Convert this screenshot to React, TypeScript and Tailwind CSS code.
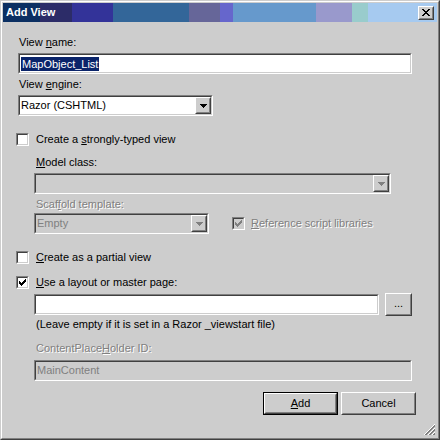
import type { ReactNode } from 'react';

// classic 3D sunken field (edit / combo)
function Sunken({ className, bg, children }: { className: string; bg: string; children?: ReactNode }) {
  return (
    <div className={`border border-t-[#808080] border-l-[#808080] border-r-white border-b-white ${className}`}>
      <div className={`h-full flex items-stretch border border-t-[#404040] border-l-[#404040] border-r-[#cdcdcd] border-b-[#cdcdcd] ${bg}`}>
        {children}
      </div>
    </div>
  );
}

function Raised({ className, children }: { className: string; children?: ReactNode }) {
  return (
    <div className={`border border-t-white border-l-white border-r-[#404040] border-b-[#404040] bg-[#cdcdcd] ${className}`}>
      <div className="h-full flex items-center justify-center border border-t-[#cdcdcd] border-l-[#cdcdcd] border-r-[#808080] border-b-[#808080]">
        {children}
      </div>
    </div>
  );
}

function Arrow({ disabled }: { disabled?: boolean }) {
  return (
    <svg width="7" height="4" viewBox="0 0 7 4" shapeRendering="crispEdges">
      <path d="M0 0h7v1H0zM1 1h5v1H1zM2 2h3v1H2zM3 3h1v1H3z" fill={disabled ? '#808080' : '#000'} />
    </svg>
  );
}

function Combo({ className, text, disabled }: { className: string; text: string; disabled?: boolean }) {
  return (
    <Sunken className={className} bg={disabled ? 'bg-[#cdcdcd]' : 'bg-white'}>
      <span className={`flex-1 pl-px leading-[17px] ${disabled ? 'text-[#808080]' : 'text-black'}`}>{text}</span>
      <Raised className="w-[16px] h-[17px]">
        <Arrow disabled={disabled} />
      </Raised>
    </Sunken>
  );
}

function Check({ checked, disabled }: { checked?: boolean; disabled?: boolean }) {
  return (
    <Sunken className="w-[13px] h-[13px] shrink-0" bg={disabled ? 'bg-[#cdcdcd]' : 'bg-white'}>
      {checked && (
        <svg width="9" height="9" viewBox="0 0 9 9" shapeRendering="crispEdges">
          <path
            d="M7 1h1v3H7zM6 2h1v3H6zM5 3h1v3H5zM4 4h1v3H4zM3 5h1v3H3zM2 4h1v3H2zM1 3h1v3H1z"
            fill={disabled ? '#808080' : '#000'}
          />
        </svg>
      )}
    </Sunken>
  );
}

const dim = 'text-[#808080] [text-shadow:1px_1px_0_#fff]';

export default function App() {
  return (
    <div className="w-[440px] h-[440px] bg-[#cdcdcd] border border-t-[#cdcdcd] border-l-[#cdcdcd] border-r-[#404040] border-b-[#404040] font-['Liberation_Sans',Arial,sans-serif] text-[11px] leading-[13px] text-black">
      <div className="h-full flex flex-col p-px border border-t-white border-l-white border-r-[#808080] border-b-[#808080]">
        {/* title bar */}
        <div className="h-[19px] shrink-0 flex items-center justify-between pl-[3px] pr-[3px] bg-[linear-gradient(to_right,#0b2f62_0px,#0b2f62_37px,#2c2c68_37px,#2c2c68_69px,#333399_69px,#333399_110px,#336699_110px,#336699_186px,#666699_186px,#666699_217px,#6666cc_217px,#6666cc_230px,#6699cc_230px,#6699cc_313px,#9999cc_313px,#9999cc_349px,#99cccc_349px,#99cccc_365px,#a6caf0_365px)]">
          <span className="text-white font-bold text-[11px]">Add View</span>
          <Raised className="w-[16px] h-[14px]">
            <svg width="8" height="7" viewBox="0 0 8 7" shapeRendering="crispEdges">
              <path d="M0 0h2v1H0zM6 0h2v1H6zM1 1h2v1H1zM5 1h2v1H5zM2 2h4v1H2zM3 3h2v1H3zM2 4h4v1H2zM1 5h2v1H1zM5 5h2v1H5zM0 6h2v1H0zM6 6h2v1H6z" fill="#000" />
            </svg>
          </Raised>
        </div>

        {/* body */}
        <div className="relative flex-1 flex flex-col items-start">
          <div className="mt-[14px] ml-[16px]">View <u>n</u>ame:</div>
          <Sunken className="mt-[4px] ml-[15px] w-[394px] h-[21px]" bg="bg-white">
            <span className="self-center ml-px leading-[14px] px-px bg-[#0a246a] text-white">MapObject_List</span>
          </Sunken>

          <div className="mt-[4px] ml-[16px]">View <u>e</u>ngine:</div>
          <Combo className="mt-[4px] ml-[15px] w-[195px] h-[21px]" text="Razor (CSHTML)" />

          <div className="mt-[17px] ml-[13px] flex items-center gap-[7px]">
            <Check />
            <span>Create a <u>s</u>trongly-typed view</span>
          </div>

          <div className="mt-[10px] ml-[33px]"><u>M</u>odel class:</div>
          <Combo className="mt-[4px] ml-[31px] w-[357px] h-[21px]" text="" disabled />

          <div className={`mt-[4px] ml-[33px] ${dim}`}>Scaf<u>f</u>old template:</div>
          <div className="mt-[2px] ml-[31px] flex items-center">
            <Combo className="w-[175px] h-[21px]" text="Empty" disabled />
            <div className="ml-[23px] flex items-center gap-[6px]">
              <Check checked disabled />
              <span className={dim}><u>R</u>eference script libraries</span>
            </div>
          </div>

          <div className="mt-[17px] ml-[13px] flex items-center gap-[7px]">
            <Check />
            <span><u>C</u>reate as a partial view</span>
          </div>

          <div className="mt-[12px] ml-[13px] flex items-center gap-[7px]">
            <Check checked />
            <span><u>U</u>se a layout or master page:</span>
          </div>

          <div className="mt-[4px] ml-[31px] flex items-center gap-[6px]">
            <Sunken className="w-[345px] h-[21px]" bg="bg-white" />
            <Raised className="w-[27px] h-[23px]">
              <span className="leading-[11px] pb-[2px]">...</span>
            </Raised>
          </div>

          <div className="mt-[2px] ml-[33px]">(Leave empty if it is set in a Razor _viewstart file)</div>

          <div className={`mt-[11px] ml-[33px] ${dim}`}>ContentPlace<u>H</u>older ID:</div>
          <Sunken className="mt-[5px] ml-[31px] w-[378px] h-[21px]" bg="bg-[#cdcdcd]">
            <span className="self-center pl-px text-[#808080]">MainContent</span>
          </Sunken>

          <div className="mt-[11px] self-end mr-[21px] flex gap-[3px]">
            <div className="border border-black">
              <Raised className="w-[73px] h-[21px]">
                <span><u>A</u>dd</span>
              </Raised>
            </div>
            <Raised className="w-[75px] h-[23px]">
              <span>Cancel</span>
            </Raised>
          </div>

          {/* size grip */}
          <svg className="absolute right-[1px] bottom-[1px]" width="12" height="12" viewBox="0 0 12 12" shapeRendering="crispEdges">
            <path d="M11 0L0 11" stroke="#fff" />
            <path d="M11 1L1 11M11 2L2 11" stroke="#808080" />
            <path d="M11 4L4 11" stroke="#fff" />
            <path d="M11 5L5 11M11 6L6 11" stroke="#808080" />
            <path d="M11 8L8 11" stroke="#fff" />
            <path d="M11 9L9 11M11 10L10 11" stroke="#808080" />
          </svg>
        </div>
      </div>
    </div>
  );
}
